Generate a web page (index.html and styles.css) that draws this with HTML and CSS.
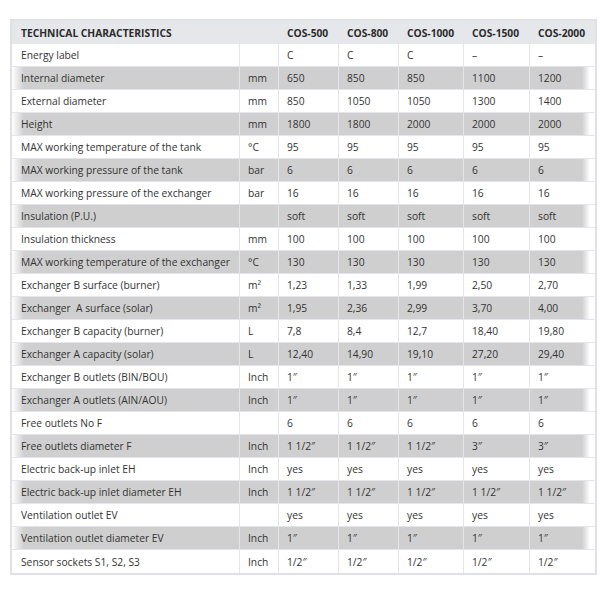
FILE: index.html
```html
<!DOCTYPE html>
<html>
<head>
<meta charset="utf-8">
<link rel="stylesheet" href="styles.css">
</head>
<body>
<table class="spec">
<colgroup>
<col class="c-name"><col class="c-unit"><col class="c-500"><col class="c-800"><col class="c-1000"><col class="c-1500"><col class="c-2000">
</colgroup>
<thead>
<tr><th>TECHNICAL CHARACTERISTICS</th><th></th><th>COS-500</th><th>COS-800</th><th>COS-1000</th><th>COS-1500</th><th>COS-2000</th></tr>
</thead>
<tbody>
<tr><td>Energy label</td><td></td><td>C</td><td>C</td><td>C</td><td>–</td><td>–</td></tr>
<tr class="alt"><td>Internal diameter</td><td>mm</td><td>650</td><td>850</td><td>850</td><td>1100</td><td>1200</td></tr>
<tr><td>External diameter</td><td>mm</td><td>850</td><td>1050</td><td>1050</td><td>1300</td><td>1400</td></tr>
<tr class="alt"><td>Height</td><td>mm</td><td>1800</td><td>1800</td><td>2000</td><td>2000</td><td>2000</td></tr>
<tr><td>MAX working temperature of the tank</td><td>°C</td><td>95</td><td>95</td><td>95</td><td>95</td><td>95</td></tr>
<tr class="alt"><td>MAX working pressure of the tank</td><td>bar</td><td>6</td><td>6</td><td>6</td><td>6</td><td>6</td></tr>
<tr><td>MAX working pressure of the exchanger</td><td>bar</td><td>16</td><td>16</td><td>16</td><td>16</td><td>16</td></tr>
<tr class="alt"><td>Insulation (P.U.)</td><td></td><td>soft</td><td>soft</td><td>soft</td><td>soft</td><td>soft</td></tr>
<tr><td>Insulation thickness</td><td>mm</td><td>100</td><td>100</td><td>100</td><td>100</td><td>100</td></tr>
<tr class="alt"><td>MAX working temperature of the exchanger</td><td>°C</td><td>130</td><td>130</td><td>130</td><td>130</td><td>130</td></tr>
<tr><td>Exchanger B surface (burner)</td><td>m²</td><td>1,23</td><td>1,33</td><td>1,99</td><td>2,50</td><td>2,70</td></tr>
<tr class="alt"><td>Exchanger&nbsp; A surface (solar)</td><td>m²</td><td>1,95</td><td>2,36</td><td>2,99</td><td>3,70</td><td>4,00</td></tr>
<tr><td>Exchanger B capacity (burner)</td><td>L</td><td>7,8</td><td>8,4</td><td>12,7</td><td>18,40</td><td>19,80</td></tr>
<tr class="alt"><td>Exchanger A capacity (solar)</td><td>L</td><td>12,40</td><td>14,90</td><td>19,10</td><td>27,20</td><td>29,40</td></tr>
<tr><td>Exchanger B outlets (BIN/BOU)</td><td>Inch</td><td>1″</td><td>1″</td><td>1″</td><td>1″</td><td>1″</td></tr>
<tr class="alt"><td>Exchanger A outlets (AIN/AOU)</td><td>Inch</td><td>1″</td><td>1″</td><td>1″</td><td>1″</td><td>1″</td></tr>
<tr><td>Free outlets No F</td><td></td><td>6</td><td>6</td><td>6</td><td>6</td><td>6</td></tr>
<tr class="alt"><td>Free outlets diameter F</td><td>Inch</td><td>1 1/2″</td><td>1 1/2″</td><td>1 1/2″</td><td>3″</td><td>3″</td></tr>
<tr><td>Electric back-up inlet EH</td><td>Inch</td><td>yes</td><td>yes</td><td>yes</td><td>yes</td><td>yes</td></tr>
<tr class="alt"><td>Electric back-up inlet diameter EH</td><td>Inch</td><td>1 1/2″</td><td>1 1/2″</td><td>1 1/2″</td><td>1 1/2″</td><td>1 1/2″</td></tr>
<tr><td>Ventilation outlet EV</td><td></td><td>yes</td><td>yes</td><td>yes</td><td>yes</td><td>yes</td></tr>
<tr class="alt"><td>Ventilation outlet diameter EV</td><td>Inch</td><td>1″</td><td>1″</td><td>1″</td><td>1″</td><td>1″</td></tr>
<tr><td>Sensor sockets S1, S2, S3</td><td>Inch</td><td>1/2″</td><td>1/2″</td><td>1/2″</td><td>1/2″</td><td>1/2″</td></tr>
</tbody>
</table>
</body>
</html>
```

FILE: styles.css
```css
html, body {
  margin: 0;
  padding: 0;
  background: #ffffff;
}
body {
  padding: 19px 0 0 10px;
  font-family: "Open Sans", "DejaVu Sans", sans-serif;
  font-size: 10.25px;
  color: #333333;
}
.spec {
  table-layout: fixed;
  width: 587px;
  border-collapse: separate;
  border-spacing: 0;
  border: 2px solid #dfe1e6;
}
.c-name { width: 228px; }
.c-unit { width: 39px; }
.c-500 { width: 60px; }
.c-800 { width: 60px; }
.c-1000 { width: 65px; }
.c-1500 { width: 66px; }
.c-2000 { width: 65px; }

.spec th {
  background: #e5e7eb;
  font-weight: 700;
  text-align: left;
  height: 23px;
  padding: 0 0 0 8px;
  box-sizing: border-box;
  color: #2b2b2b;
  white-space: nowrap;
}
.spec th:first-child { padding-left: 9px; }
.spec td {
  height: 23px;
  box-sizing: border-box;
  padding: 0 0 0 8px;
  border-right: 1px solid #e3e5ea;
  border-bottom: 1px solid #e3e5ea;
  white-space: nowrap;
  vertical-align: middle;
}
.spec td:first-child { padding-left: 9px; }
.spec td:last-child { border-right: 0; }
.spec tbody tr:last-child td { border-bottom: 0; }
.spec tr.alt td { background: #cfcfcf; }
.spec tr.alt td:first-child {
  background: linear-gradient(to right, #ffffff 0, #cfcfcf 12px);
}
.spec tr.alt td:last-child {
  background: linear-gradient(to left, #ffffff 0, #ffffff 5px, #cfcfcf 13px);
}
```
